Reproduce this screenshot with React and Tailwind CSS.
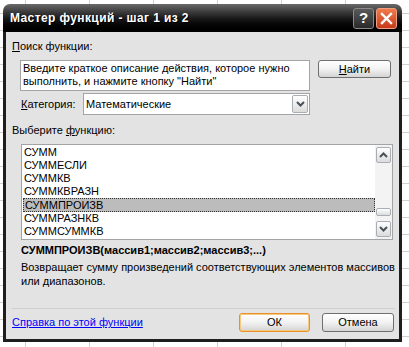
import React from "react";

const items = ["СУММ", "СУММЕСЛИ", "СУММКВ", "СУММКВРАЗН", "СУММПРОИЗВ", "СУММРАЗНКВ", "СУММСУММКВ"];

function Chevron({ up }) {
  return (
    <svg width="9" height="6" viewBox="0 0 9 6">
      <path d={up ? "M1 5 L4.5 1.5 L8 5" : "M1 1 L4.5 4.5 L8 1"} fill="none" stroke="#4a5058" strokeWidth="2" />
    </svg>
  );
}

function Btn({ children, def, className = "" }) {
  return (
    <div
      className={
        "flex shrink-0 items-center justify-center rounded-[3px] border bg-gradient-to-b from-white via-[#f2f2f2] to-[#d4d4d4] text-black " +
        (def ? "border-[#e8902a] shadow-[inset_0_0_0_1px_#f7c97e] " : "border-[#6f6f6f] ") +
        className
      }
    >
      {children}
    </div>
  );
}

export default function App() {
  return (
    <div className="h-[347px] w-[409px] overflow-hidden bg-white bg-[linear-gradient(to_right,#d0d0d0_1px,transparent_1px),linear-gradient(to_bottom,#d0d0d0_1px,transparent_1px)] bg-[size:64px_17px] bg-[position:25px_13px] pl-[3px] pt-[4px] font-['Liberation_Sans',sans-serif]">
      <div className="flex h-[338px] w-[399px] flex-col">
        {/* title bar */}
        <div className="flex h-[28px] shrink-0 items-center justify-between rounded-t-[7px] bg-gradient-to-b from-[#6a6a6a] via-[#1c1c1c] to-[#000] pl-[7px] pr-[5px]">
          <span className="text-[12px] font-bold tracking-[0.4px] text-white [text-shadow:1px_1px_0_#000]">Мастер функций - шаг 1 из 2</span>
          <div className="flex gap-[2px]">
            <div className="flex h-[21px] w-[21px] items-center justify-center rounded-[3px] border border-[#8a8a8a] bg-gradient-to-b from-[#5a5a5a] to-[#2a2a2a] text-[15px] font-bold text-white">?</div>
            <div className="flex h-[21px] w-[21px] items-center justify-center rounded-[3px] border border-[#f0a080] bg-gradient-to-b from-[#f07a4a] to-[#c8381a]">
              <svg width="13" height="13" viewBox="0 0 13 13">
                <path d="M2 2 L11 11 M11 2 L2 11" stroke="#fff" strokeWidth="2.4" strokeLinecap="square" />
              </svg>
            </div>
          </div>
        </div>
        {/* body */}
        <div className="flex flex-1 flex-col whitespace-nowrap border-x-[3px] border-b-[3px] border-[#1e1e1e] bg-[#e3e3e3] pl-[6px] text-[11px] leading-[13px] text-black [&>*]:shrink-0">
          <div className="mt-[8px]"><span className="underline">П</span>оиск функции:</div>
          <div className="mt-[7px] flex items-start">
            <div className="ml-[8px] h-[31px] w-[290px] whitespace-normal border border-[#a4a4a4] bg-white px-[2px] pt-[1px]">
              Введите краткое описание действия, которое нужно выполнить, и нажмите кнопку "Найти"
            </div>
            <Btn className="ml-[8px] h-[18px] w-[73px]"><span><span className="underline">Н</span>айти</span></Btn>
          </div>
          <div className="mt-[2px] flex items-center">
            <div className="ml-[9px] w-[62px]"><span className="underline">К</span>атегория:</div>
            <div className="flex h-[22px] w-[227px] items-center justify-between border border-[#a4a4a4] bg-white pl-[2px] pr-[1px]">
              <span>Математические</span>
              <div className="flex h-[18px] w-[16px] items-center justify-center rounded-[2px] border border-[#a8aeb6] bg-gradient-to-b from-white to-[#dcdcdc]">
                <Chevron />
              </div>
            </div>
          </div>
          <div className="mt-[9px]">Выберите <span className="underline">ф</span>ункцию:</div>
          <div className="ml-[9px] mt-[7px] flex h-[96px] w-[372px] border border-[#a4a4a4] bg-white">
            <div className="flex-1 pl-[1px] pt-[1px]">
              {items.map((it) => (
                <div
                  key={it}
                  className={
                    "h-[13px] pl-[1px] " +
                    (it === "СУММПРОИЗВ" ? "h-[14px] border border-dotted border-[#333] bg-[#bcbcbc] pl-0" : "")
                  }
                >
                  {it}
                </div>
              ))}
            </div>
            <div className="flex w-[17px] flex-col items-center bg-[#f3f3f3] py-[2px]">
              <div className="flex h-[16px] w-[15px] items-center justify-center rounded-[2px] border border-[#a8aeb6] bg-gradient-to-b from-white to-[#dcdcdc]">
                <Chevron up />
              </div>
              <div className="flex-1" />
              <div className="mb-[5px] h-[8px] w-[15px] rounded-[2px] border border-[#a8aeb6] bg-gradient-to-b from-white to-[#dcdcdc]" />
              <div className="flex h-[16px] w-[15px] items-center justify-center rounded-[2px] border border-[#a8aeb6] bg-gradient-to-b from-white to-[#dcdcdc]">
                <Chevron />
              </div>
            </div>
          </div>
          <div className="ml-[9px] mt-[4px] font-bold">СУММПРОИЗВ(массив1;массив2;массив3;...)</div>
          <div className="ml-[9px] mt-[3px] leading-[14px]">
            Возвращает сумму произведений соответствующих элементов массивов
            <br />
            или диапазонов.
          </div>
          <div className="mr-[4px] mt-[20px] h-[2px] border-t border-[#cfcfcf] border-b-white" />
          <div className="mt-[3px] flex items-center">
            <span className="flex-1 text-[#0000ff] underline">Справка по этой функции</span>
            <Btn def className="h-[19px] w-[71px]">ОК</Btn>
            <Btn className="ml-[12px] mr-[5px] h-[19px] w-[72px]">Отмена</Btn>
          </div>
        </div>
      </div>
    </div>
  );
}
